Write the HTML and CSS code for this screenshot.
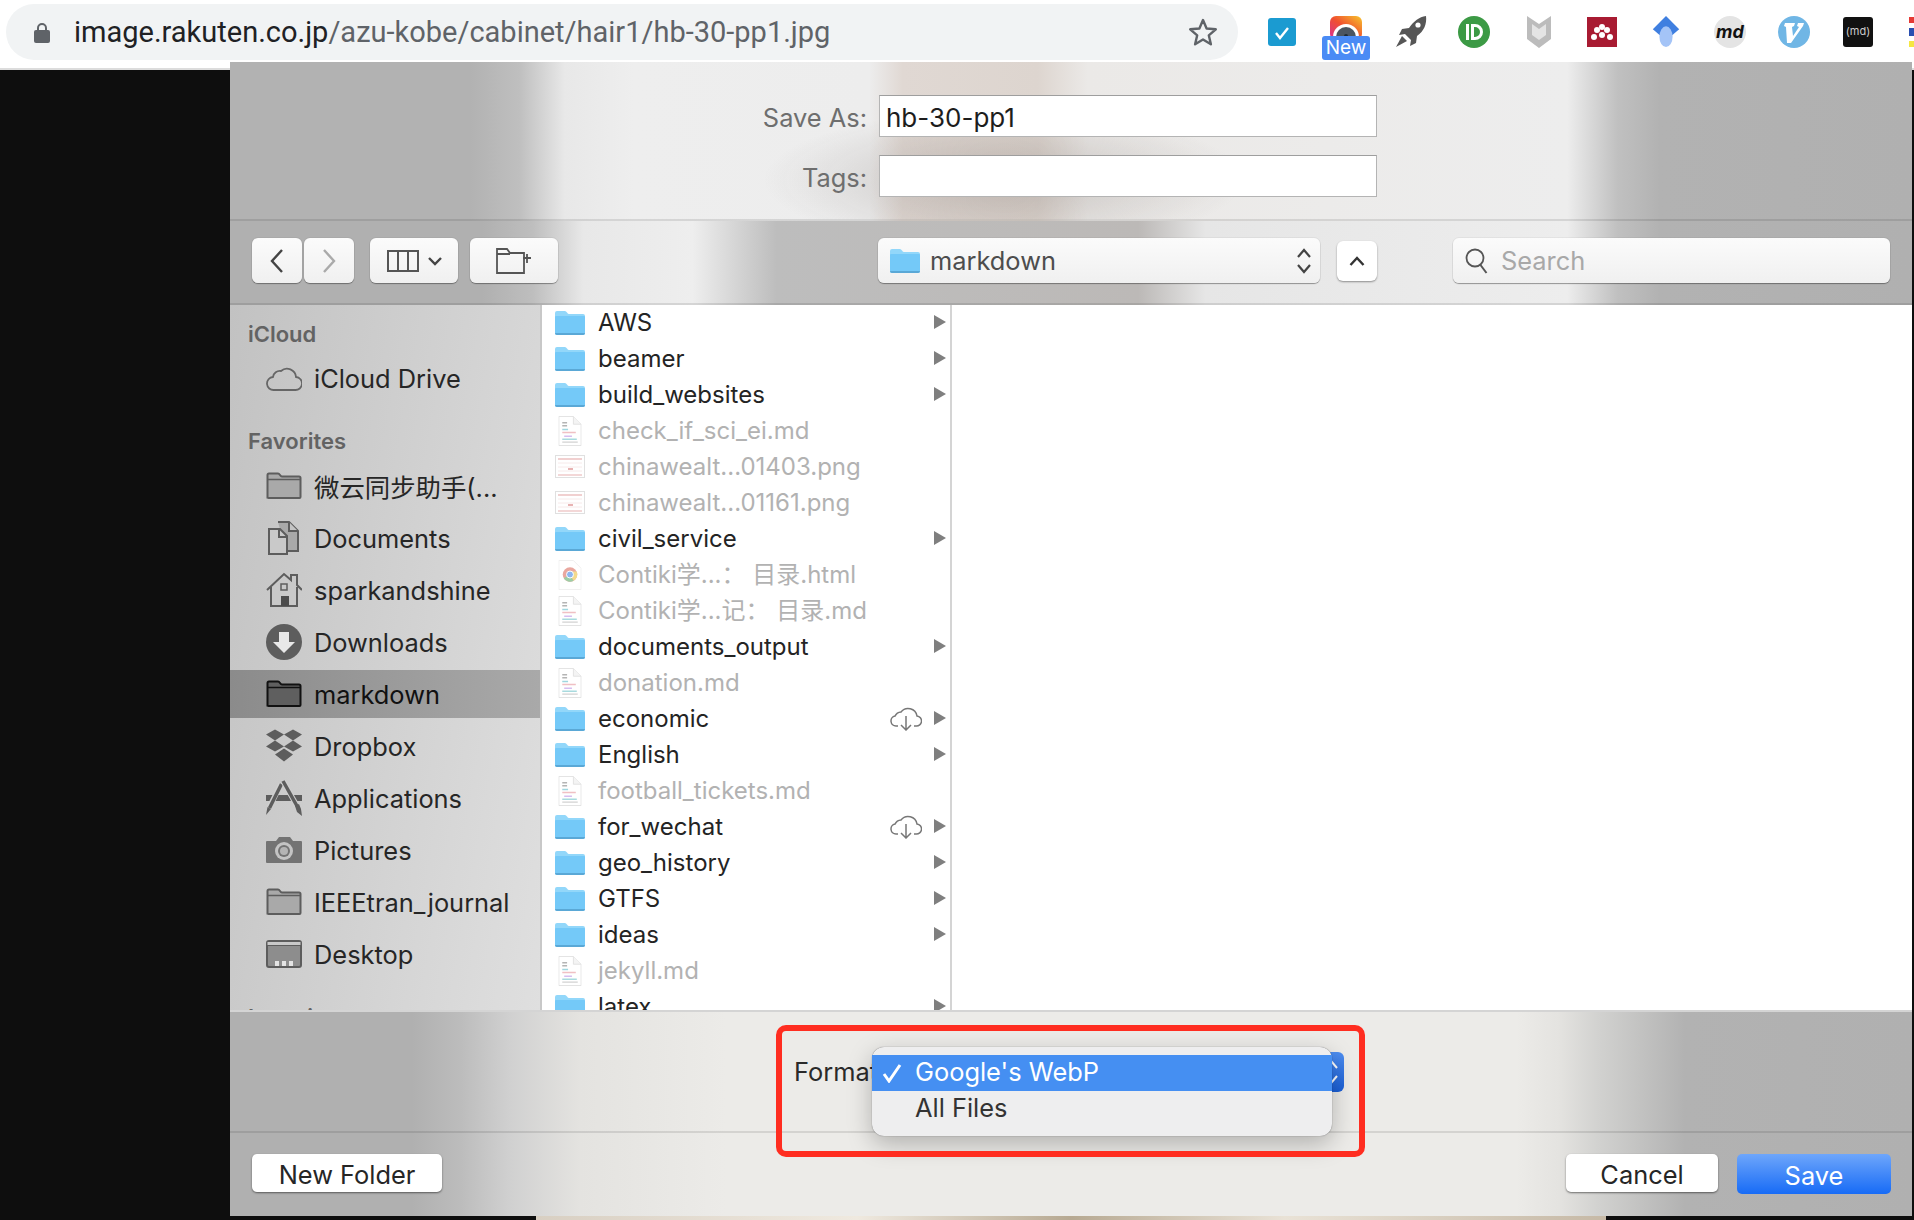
FILE: index.html
```html
<!DOCTYPE html>
<html>
<head>
    <meta charset="UTF-8">
    <title>Save As</title>
    <link rel="stylesheet" href="styles.css">
</head>
<body>
    <svg class="defs" width="0" height="0">
        <symbol id="blueFolder" viewBox="0 0 30 26">
            <path d="M0 3q0-2 2-2h8q1 0 2 1.500t2 1.500h14q2 0 2 2v16q0 2-2 2H2q-2 0-2-2z" fill="#92d7fa"/>
            <path d="M0 7q0-1 1-1h28q1 0 1 1v16q0 2-2 2H2q-2 0-2-2z" fill="#74c9f8"/>
            <path d="M0 23h30q0 2-2 2H2q-2 0-2-2z" fill="#5aa8d6"/>
        </symbol>
        <symbol id="mdDoc" viewBox="0 0 24 31">
            <path d="M.5.500h15l8 8v22H.5z" fill="#fff" stroke="#e2e2e2"/>
            <path d="M15.500.500v8h8" fill="#f4f4f4" stroke="#e2e2e2"/>
            <path d="M4 7h5M4 10h5" stroke="#b4b4b4" stroke-width="1.500"/>
            <path d="M4 14h6" stroke="#9fd6df" stroke-width="1.500"/>
            <path d="M4 17h14" stroke="#f0c0c4" stroke-width="1.500"/>
            <path d="M6 21h8" stroke="#d6bdf0" stroke-width="1.500"/>
            <path d="M4 24h15" stroke="#a8dade" stroke-width="1.500"/>
            <path d="M4 27h16" stroke="#d2d2d2" stroke-width="1.500"/>
        </symbol>
        <symbol id="pngDoc" viewBox="0 0 30 24">
            <rect x=".5" y=".5" width="29" height="22" fill="#fff" stroke="#e0e0e0"/>
            <path d="M3 4h24" stroke="#ecc0c0" stroke-width="1.500"/>
            <path d="M3 8h24M3 12h24M3 16h24" stroke="#f7eaea"/>
            <path d="M3 20h24" stroke="#efcaca" stroke-width="1.500"/>
            <path d="M13 14h5" stroke="#e09a9a" stroke-width="1.500"/>
        </symbol>
        <symbol id="chromeDoc" viewBox="0 0 24 31">
            <path d="M.5.500h15l8 8v22H.5z" fill="#fff" stroke="#efefef"/>
            <circle cx="12" cy="15" r="7.500" fill="#e9a79f"/>
            <path d="M12 15 5.500 18.800A7.500 7.500 0 0 0 15.800 21.500z" fill="#9dcda5"/>
            <path d="M12 15l3.800 6.500A7.500 7.500 0 0 0 19 12h-7z" fill="#f3da8d"/>
            <circle cx="12" cy="15" r="3.600" fill="#8eb6f0" stroke="#fff"/>
        </symbol>
        <symbol id="grayFolder" viewBox="0 0 36 28">
            <path d="M1.500 26.500V3q0-1.500 1.500-1.500h9q1 0 2 1.500t2 1.500h17q1.500 0 1.500 1.500v19q0 1-1 1H2.500q-1 0-1-1z" fill="#a9a9a9" stroke="#5d5d5d" stroke-width="2"/>
            <path d="M1.500 7.500h33" stroke="#5d5d5d" stroke-width="1.500"/>
        </symbol>
        <symbol id="cloudDown" viewBox="0 0 32 24">
            <path d="M8 19H6a5 5 0 0 1-1-9.900A7 7 0 0 1 11 5a9 9 0 0 1 16 4 5 5 0 0 1-1 10h-2" fill="none" stroke="#777" stroke-width="1.500"/>
            <path d="M16 9v14m-5-5 5 5 5-5" fill="none" stroke="#777" stroke-width="1.500"/>
        </symbol>
        <symbol id="arrowRight" viewBox="0 0 12 14">
            <path d="M0 0l12 7-12 7z" fill="#7f7f7f"/>
        </symbol>
    </svg>

    <header class="topbar">
        <div class="omnibox">
            <svg class="lock" viewBox="0 0 16 21"><path d="M4 9V6a4 4 0 0 1 8 0v3" fill="none" stroke="#5f6368" stroke-width="2"/><rect y="8" width="16" height="13" rx="2" fill="#5f6368"/></svg>
            <span class="url"><span class="url-host">image.rakuten.co.jp</span>/azu-kobe/cabinet/hair1/hb-30-pp1.jpg</span>
            <svg class="star" viewBox="0 0 30 28"><path d="M15 2l3.600 8.500 9.200.8-7 6 2.100 9L15 21.500l-7.900 4.800 2.100-9-7-6 9.200-.8z" fill="none" stroke="#5f6368" stroke-width="2.400" stroke-linejoin="round"/></svg>
        </div>
        <div class="extensions">
            <svg class="ext ext-check" viewBox="0 0 28 28"><rect width="28" height="28" rx="3" fill="#1b9bd1"/><path d="M8 15l4 5 8-10" fill="none" stroke="#fff" stroke-width="2.400"/></svg>
            <div class="ext-new">
                <svg class="ext-camera" viewBox="0 0 32 24"><defs><linearGradient id="insta" x1="0" x2="1" y1="1" y2="0"><stop offset="0" stop-color="#d62f9a"/><stop offset=".5" stop-color="#f0502f"/><stop offset="1" stop-color="#f7c52c"/></linearGradient></defs><rect width="32" height="24" rx="6" fill="url(#insta)"/><circle cx="16" cy="21" r="13" fill="#fff"/><circle cx="16" cy="21" r="10" fill="#4b5560"/><circle cx="16" cy="20" r="2" fill="#1f2a33"/></svg>
                <span class="new-badge">New</span>
            </div>
            <svg class="ext ext-rocket" viewBox="0 0 32 32"><path d="M31 0c1 8-2 15-9 20l-1 7-6 3 1-6-6-6-6 1 3-6 7-1C19 5 24 1 31 0z" fill="#565656"/><circle cx="23" cy="9" r="2.600" fill="#fff"/><path d="M7 20l5 5-11 6z" fill="#565656"/></svg>
            <svg class="ext ext-id" viewBox="0 0 32 32"><circle cx="16" cy="16" r="16" fill="#3c9a45"/><path d="M8 8h3v16H8z" fill="#fff"/><path d="M13 8h4a8 8 0 0 1 0 16h-4zm3 3v10h1a5 5 0 0 0 0-10z" fill="#fff"/></svg>
            <svg class="ext ext-shield" viewBox="0 0 24 32"><path d="M0 0l12 8L24 0v23l-12 9-12-9z" fill="#bcbcbc"/><path d="M5 8l7 5 7-5v11l-7 5-7-5z" fill="#e4e4e4"/></svg>
            <svg class="ext ext-mendeley" viewBox="0 0 30 30"><rect width="30" height="30" fill="#a81b32"/><g fill="#fff"><circle cx="15" cy="10" r="3"/><circle cx="10" cy="13" r="3"/><circle cx="20" cy="13" r="3"/><circle cx="7" cy="20" r="3"/><circle cx="15" cy="18" r="3"/><circle cx="23" cy="20" r="3"/></g></svg>
            <svg class="ext ext-scholar" viewBox="0 0 28 34"><path d="M14 0l14 14-14 12L0 14z" fill="#3f7fe0"/><ellipse cx="14" cy="22" rx="7" ry="11" fill="#a4c4f7"/></svg>
            <div class="ext-round ext-md">md</div>
            <svg class="ext ext-vim" viewBox="0 0 32 32"><circle cx="16" cy="16" r="16" fill="#70b6e5"/><path d="M7 7h10l-1 3-2 1 1 9 6-9-2-1 1-3h6l-1 3-12 17h-4L8 11 6 10z" fill="#fff"/></svg>
            <div class="ext-square">(md)</div>
            <div class="ext-cut"><i></i><i></i><i></i></div>
        </div>
    </header>

    <div class="stage">
        <main class="dialog">
            <section class="fields">
                <div class="field-row">
                    <label>Save As:</label>
                    <div class="field-input">hb-30-pp1</div>
                </div>
                <div class="field-row">
                    <label>Tags:</label>
                    <div class="field-input"></div>
                </div>
            </section>

            <section class="toolbar">
                <div class="tool tool-nav"><svg width="16" height="26" viewBox="0 0 16 26"><path d="M13 2 3 13l10 11" fill="none" stroke="#444" stroke-width="2.400"/></svg></div>
                <div class="tool tool-nav tool-forward"><svg width="16" height="26" viewBox="0 0 16 26"><path d="M3 2l10 11L3 24" fill="none" stroke="#aaa" stroke-width="2.400"/></svg></div>
                <div class="tool tool-view">
                    <svg width="32" height="22" viewBox="0 0 32 22"><rect x="1" y="1" width="30" height="20" fill="none" stroke="#555" stroke-width="2"/><path d="M11 1v20M21 1v20" stroke="#555" stroke-width="2"/></svg>
                    <svg width="14" height="10" viewBox="0 0 14 10"><path d="M1 2l6 6 6-6" fill="none" stroke="#444" stroke-width="2.400"/></svg>
                </div>
                <div class="tool tool-add">
                    <svg width="36" height="26" viewBox="0 0 36 26"><path d="M1 25V1h10l3 4h14v20zM1 6h13" fill="none" stroke="#555" stroke-width="1.800"/><path d="M31 6v9M27 10h8" stroke="#555" stroke-width="1.800"/></svg>
                </div>
                <div class="path-select">
                    <svg class="path-folder" viewBox="0 0 30 26"><use href="#blueFolder"/></svg>
                    <span class="path-name">markdown</span>
                    <svg class="path-arrows" width="16" height="26" viewBox="0 0 16 26"><path d="M2 9l6-7 6 7M2 17l6 7 6-7" fill="none" stroke="#444" stroke-width="2.200"/></svg>
                </div>
                <div class="up-button"><svg width="16" height="10" viewBox="0 0 16 10"><path d="M1.500 9 8 2l6.500 7" fill="none" stroke="#333" stroke-width="2.400"/></svg></div>
                <div class="search-box">
                    <svg width="24" height="26" viewBox="0 0 24 26"><circle cx="10" cy="10" r="8.500" fill="none" stroke="#555" stroke-width="1.800"/><path d="M15.500 17l6 8" stroke="#555" stroke-width="2"/></svg>
                    <span>Search</span>
                </div>
            </section>

            <section class="browser">
                <nav class="sidebar">
                    <h4 class="side-title">iCloud</h4>
                    <a class="side-item">
                        <svg class="side-icon" viewBox="0 0 36 36"><path d="M8 30a6.500 6.500 0 0 1-1-13 7 7 0 0 1 8-6 9 9 0 0 1 15 6 6.500 6.500 0 0 1-1 13z" fill="none" stroke="#666" stroke-width="1.800"/></svg>
                        iCloud Drive
                    </a>
                    <h4 class="side-title side-title-next">Favorites</h4>
                    <a class="side-item">
                        <svg class="side-icon" viewBox="0 0 36 28"><use href="#grayFolder"/></svg>
                        微云同步助手(...
                    </a>
                    <a class="side-item">
                        <svg class="side-icon" viewBox="0 0 36 36"><path d="M12 2h11l9 9v20H20" fill="#a9a9a9" stroke="#5d5d5d" stroke-width="2"/><path d="M23 2v9h9" fill="#c4c4c4" stroke="#5d5d5d" stroke-width="2"/><path d="M3 9h11l7 7v18H3z" fill="#c9c9c9" stroke="#5d5d5d" stroke-width="2"/><path d="M13 9v8h8" fill="none" stroke="#5d5d5d" stroke-width="2"/></svg>
                        Documents
                    </a>
                    <a class="side-item">
                        <svg class="side-icon" viewBox="0 0 36 36"><path d="M1 18 18 2l7 6V3h6v10l5 5" fill="#c9c9c9" stroke="#5d5d5d" stroke-width="2"/><path d="M5 15v19h26V15" fill="#c9c9c9" stroke="#5d5d5d" stroke-width="2"/><path d="M15 24h8v10h-8z" fill="#4c4c4c"/><rect x="15" y="12" width="6" height="6" fill="none" stroke="#5d5d5d" stroke-width="1.500"/></svg>
                        sparkandshine
                    </a>
                    <a class="side-item">
                        <svg class="side-icon" viewBox="0 0 36 36"><circle cx="18" cy="18" r="18" fill="#5d5d5d"/><path d="M13 8h10v10h6L18 29 7 18h6z" fill="#e8e8e8"/></svg>
                        Downloads
                    </a>
                    <a class="side-item side-item-active">
                        <svg class="side-icon" viewBox="0 0 36 28"><path d="M1.500 26.500V3q0-1.500 1.500-1.500h9q1 0 2 1.500t2 1.500h17q1.500 0 1.500 1.500v19q0 1-1 1H2.500q-1 0-1-1z" fill="#5f5f5f" stroke="#111" stroke-width="2"/><path d="M1.500 7.500h33" stroke="#111" stroke-width="1.500"/></svg>
                        markdown
                    </a>
                    <a class="side-item">
                        <svg class="side-icon" viewBox="0 0 36 33"><path d="M9 0l9 5-9 6-9-6zM27 0l9 5-9 6-9-6zM9 11l9 6-9 5-9-5zM27 11l9 6-9 5-9-5zM18 19l9 6-9 7-9-7z" fill="#5d5d5d"/></svg>
                        Dropbox
                    </a>
                    <a class="side-item">
                        <svg class="side-icon" viewBox="0 0 36 36"><path d="M0 15h36v6H0z" fill="#5d5d5d"/><path d="M15 4 3.500 27" stroke="#d0d0d0" stroke-width="5.500"/><path d="M15.500 4 3.500 28" stroke="#5d5d5d" stroke-width="3.500"/><path d="M1.500 27l3.500 2L0 35z" fill="#5d5d5d"/><path d="M17 1l14 25" stroke="#d0d0d0" stroke-width="5.500"/><path d="M17 1l14 25" stroke="#5d5d5d" stroke-width="3.500"/><path d="M29 26l4-2 2 5 1 7-5-4z" fill="#5d5d5d"/></svg>
                        Applications
                    </a>
                    <a class="side-item">
                        <svg class="side-icon" viewBox="0 0 36 28"><path d="M0 6q0-1 1-1h9l3-4h11l3 4h8q1 0 1 1v20q0 1-1 1H1q-1 0-1-1z" fill="#737373"/><circle cx="18" cy="15" r="9" fill="#c4c4c4"/><circle cx="18" cy="15" r="6" fill="#737373"/><circle cx="18" cy="15" r="4" fill="#b4b4b4"/></svg>
                        Pictures
                    </a>
                    <a class="side-item">
                        <svg class="side-icon" viewBox="0 0 36 28"><use href="#grayFolder"/></svg>
                        IEEEtran_journal
                    </a>
                    <a class="side-item">
                        <svg class="side-icon" viewBox="0 0 36 28"><rect x="1" y="1" width="34" height="26" rx="2" fill="#8d8d8d" stroke="#5d5d5d" stroke-width="2"/><path d="M1 5h34" stroke="#5d5d5d" stroke-width="2"/><rect x="1.500" y="2" width="33" height="3" fill="#c9c9c9"/><path d="M9 21h4v5H9zM16 21h4v5h-4zM23 21h4v5h-4z" fill="#e4e4e4"/></svg>
                        Desktop
                    </a>
                    <h4 class="side-title side-title-next">Locations</h4>
                </nav>

                <ul class="file-list">
                    <li class="file"><svg class="file-icon" viewBox="0 0 30 26"><use href="#blueFolder"/></svg><span class="file-name">AWS</span><svg class="file-arrow" viewBox="0 0 12 14"><use href="#arrowRight"/></svg></li>
                    <li class="file"><svg class="file-icon" viewBox="0 0 30 26"><use href="#blueFolder"/></svg><span class="file-name">beamer</span><svg class="file-arrow" viewBox="0 0 12 14"><use href="#arrowRight"/></svg></li>
                    <li class="file"><svg class="file-icon" viewBox="0 0 30 26"><use href="#blueFolder"/></svg><span class="file-name">build_websites</span><svg class="file-arrow" viewBox="0 0 12 14"><use href="#arrowRight"/></svg></li>
                    <li class="file file-off"><svg class="file-icon" viewBox="0 0 30 31"><use href="#mdDoc" x="3" width="24" height="31"/></svg><span class="file-name">check_if_sci_ei.md</span></li>
                    <li class="file file-off"><svg class="file-icon" viewBox="0 0 30 24"><use href="#pngDoc"/></svg><span class="file-name">chinawealt...01403.png</span></li>
                    <li class="file file-off"><svg class="file-icon" viewBox="0 0 30 24"><use href="#pngDoc"/></svg><span class="file-name">chinawealt...01161.png</span></li>
                    <li class="file"><svg class="file-icon" viewBox="0 0 30 26"><use href="#blueFolder"/></svg><span class="file-name">civil_service</span><svg class="file-arrow" viewBox="0 0 12 14"><use href="#arrowRight"/></svg></li>
                    <li class="file file-off"><svg class="file-icon" viewBox="0 0 30 31"><use href="#chromeDoc" x="3" width="24" height="31"/></svg><span class="file-name">Contiki学...： 目录.html</span></li>
                    <li class="file file-off"><svg class="file-icon" viewBox="0 0 30 31"><use href="#mdDoc" x="3" width="24" height="31"/></svg><span class="file-name">Contiki学...记： 目录.md</span></li>
                    <li class="file"><svg class="file-icon" viewBox="0 0 30 26"><use href="#blueFolder"/></svg><span class="file-name">documents_output</span><svg class="file-arrow" viewBox="0 0 12 14"><use href="#arrowRight"/></svg></li>
                    <li class="file file-off"><svg class="file-icon" viewBox="0 0 30 31"><use href="#mdDoc" x="3" width="24" height="31"/></svg><span class="file-name">donation.md</span></li>
                    <li class="file"><svg class="file-icon" viewBox="0 0 30 26"><use href="#blueFolder"/></svg><span class="file-name">economic</span><svg class="file-cloud" viewBox="0 0 32 24"><use href="#cloudDown"/></svg><svg class="file-arrow" viewBox="0 0 12 14"><use href="#arrowRight"/></svg></li>
                    <li class="file"><svg class="file-icon" viewBox="0 0 30 26"><use href="#blueFolder"/></svg><span class="file-name">English</span><svg class="file-arrow" viewBox="0 0 12 14"><use href="#arrowRight"/></svg></li>
                    <li class="file file-off"><svg class="file-icon" viewBox="0 0 30 31"><use href="#mdDoc" x="3" width="24" height="31"/></svg><span class="file-name">football_tickets.md</span></li>
                    <li class="file"><svg class="file-icon" viewBox="0 0 30 26"><use href="#blueFolder"/></svg><span class="file-name">for_wechat</span><svg class="file-cloud" viewBox="0 0 32 24"><use href="#cloudDown"/></svg><svg class="file-arrow" viewBox="0 0 12 14"><use href="#arrowRight"/></svg></li>
                    <li class="file"><svg class="file-icon" viewBox="0 0 30 26"><use href="#blueFolder"/></svg><span class="file-name">geo_history</span><svg class="file-arrow" viewBox="0 0 12 14"><use href="#arrowRight"/></svg></li>
                    <li class="file"><svg class="file-icon" viewBox="0 0 30 26"><use href="#blueFolder"/></svg><span class="file-name">GTFS</span><svg class="file-arrow" viewBox="0 0 12 14"><use href="#arrowRight"/></svg></li>
                    <li class="file"><svg class="file-icon" viewBox="0 0 30 26"><use href="#blueFolder"/></svg><span class="file-name">ideas</span><svg class="file-arrow" viewBox="0 0 12 14"><use href="#arrowRight"/></svg></li>
                    <li class="file file-off"><svg class="file-icon" viewBox="0 0 30 31"><use href="#mdDoc" x="3" width="24" height="31"/></svg><span class="file-name">jekyll.md</span></li>
                    <li class="file"><svg class="file-icon" viewBox="0 0 30 26"><use href="#blueFolder"/></svg><span class="file-name">latex</span><svg class="file-arrow" viewBox="0 0 12 14"><use href="#arrowRight"/></svg></li>
                </ul>
                <div class="preview"></div>
            </section>

            <section class="format-bar">
                <span class="format-label">Format:</span>
                <div class="format-select">
                    <svg width="12" height="26" viewBox="0 0 12 26"><path d="M1 9l5-6 5 6M1 17l5 6 5-6" fill="none" stroke="#fff" stroke-width="2"/></svg>
                </div>
            </section>

            <section class="actions">
                <button class="btn">New Folder</button>
                <button class="btn btn-cancel">Cancel</button>
                <button class="btn btn-save">Save</button>
            </section>

            <!-- popup open over the format select -->
            <div class="format-menu">
                <div class="menu-item menu-item-on">
                    <svg width="20" height="20" viewBox="0 0 20 20"><path d="M2 11l5 7L18 2" fill="none" stroke="#fff" stroke-width="3"/></svg>
                    <span>Google's WebP</span>
                </div>
                <div class="menu-item"><span>All Files</span></div>
            </div>
            <div class="red-mark"></div>
        </main>
        <div class="photo-strip"></div>
    </div>
</body>
</html>
```

FILE: styles.css
```css
* {
    box-sizing: border-box;
}
html, body {
    margin: 0;
    height: 100%;
    overflow: hidden;
}
body {
    width: 1914px;
    height: 1220px;
    background: #0e0e0e;
    color: #242424;
    font-family: Inter, "Noto Sans CJK SC", sans-serif;
    font-size: 25.4px;
}
.defs {
    position: absolute;
}

/* browser bar */
.topbar {
    height: 62px;
    background: #fff;
    display: flex;
    padding: 4px 0 2px 6px;
}
.omnibox {
    width: 1232px;
    height: 56px;
    background: #f1f3f4;
    border-radius: 28px;
    display: flex;
    align-items: center;
    padding: 0 20px 0 28px;
}
.lock {
    width: 16px;
    height: 21px;
}
.url {
    margin-left: 24px;
    font-family: Roboto, sans-serif;
    font-size: 29px;
    color: #5f6368;
    flex: 1;
}
.url-host {
    color: #202124;
}
.star {
    width: 30px;
    height: 28px;
}
.extensions {
    display: flex;
    align-items: center;
    flex: 1;
    height: 56px;
    padding-left: 30px;
}
.ext {
    display: block;
    flex: none;
}
.ext-check {
    width: 28px;
    height: 28px;
    margin-right: 26px;
}
.ext-new {
    width: 48px;
    height: 56px;
    margin-right: 25px;
    text-align: center;
    padding-top: 12px;
    position: relative;
}
.ext-camera {
    width: 32px;
    height: 24px;
    display: block;
    margin: 0 auto;
}
.new-badge {
    position: absolute;
    left: 0;
    top: 32px;
    width: 48px;
    height: 24px;
    background: #4a8bf5;
    border-radius: 3px;
    color: #fff;
    font-size: 19px;
    line-height: 24px;
}
.ext-rocket {
    width: 32px;
    height: 32px;
    margin-right: 31px;
}
.ext-id {
    width: 32px;
    height: 32px;
    margin-right: 37px;
}
.ext-shield {
    width: 24px;
    height: 32px;
    margin-right: 36px;
}
.ext-mendeley {
    width: 30px;
    height: 30px;
    margin-right: 35px;
}
.ext-scholar {
    width: 28px;
    height: 32px;
    margin-right: 34px;
}
.ext-round {
    width: 32px;
    height: 32px;
    margin-right: 32px;
    border-radius: 50%;
    background: #e4e4e4;
    color: #111;
    font-size: 18px;
    font-weight: 700;
    font-style: italic;
    text-align: center;
    line-height: 31px;
}
.ext-vim {
    width: 32px;
    height: 32px;
    margin-right: 33px;
}
.ext-square {
    width: 30px;
    height: 30px;
    margin-right: 36px;
    border-radius: 3px;
    background: #111;
    color: #ccc;
    font-size: 11px;
    text-align: center;
    line-height: 29px;
}
.ext-cut {
    width: 5px;
    flex: none;
    height: 30px;
    display: flex;
    flex-direction: column;
    justify-content: space-between;
}
.ext-cut i {
    display: block;
    height: 6px;
    background: #e53935;
}
.ext-cut i:nth-child(2) {
    background: #2a4fb0;
    height: 8px;
}
.ext-cut i:nth-child(3) {
    background: #f5e642;
}

/* backdrop behind the sheet */
.stage {
    height: 1158px;
    padding-left: 230px;
    background: linear-gradient(#fff 6px, #dcdcdc 6px, #dcdcdc 8px, #0e0e0e 8px);
}
.dialog {
    position: relative;
    width: 1682px;
    height: 1154px;
    display: flex;
    flex-direction: column;
}
.photo-strip {
    width: 1070px;
    height: 4px;
    margin-left: 306px;
    background: linear-gradient(90deg, #d8cfc2, #efe9df 30%, #b7a992 50%, #e9e2d6 70%, #c6b9a6);
}

/* name and tags */
.fields {
    height: 159px;
    padding-top: 33px;
    border-bottom: 2px solid rgba(0, 0, 0, .1);
    background:
        radial-gradient(ellipse 240px 70px at 46% 75%, rgba(120, 110, 105, .32), transparent),
        linear-gradient(90deg, #b2b2b2 0, #b2b2b2 14.300%, #bfbfbf 17.200%, #e8e8e8 19.900%, #eeeeee 24%, #ededed 38%, #e0d8d3 40%, #ddd5cf 48%, #ebe9e7 51%, #ededed 79.500%, #c0c0c0 82.500%, #b2b2b2 85%, #b0b0b0 100%);
}
.field-row {
    display: grid;
    grid-template-columns: 637px 498px;
    column-gap: 12px;
    align-items: center;
    margin-bottom: 18px;
}
.field-row label {
    text-align: right;
    color: #6e6e6e;
    padding-top: 2px;
}
.field-input {
    height: 42px;
    line-height: 44px;
    padding-left: 6px;
    background: #fff;
    border: 1px solid #b4b4b4;
    border-top-color: #9e9e9e;
    color: #1d1d1d;
    font-size: 26px;
}

/* toolbar */
.toolbar {
    height: 84px;
    display: flex;
    align-items: center;
    padding: 0 22px 3px;
    border-bottom: 2px solid rgba(0, 0, 0, .1);
    background: linear-gradient(90deg, #b0b0b0 0, #b0b0b0 15%, #bebebe 18%, #e8e8e8 21%, #eeeeee 27.500%, #bdbdbd 32.500%, #bcb9b7 54%, #e6e6e6 58%, #ededed 79.500%, #c0c0c0 82.500%, #b2b2b2 85%, #b0b0b0 100%);
}
.tool,
.path-select,
.search-box {
    height: 45px;
    border-radius: 6px;
    background: linear-gradient(#fbfbfb, #f0f0f0);
    box-shadow: 0 1px 1px rgba(0, 0, 0, .35), 0 0 0 1px rgba(0, 0, 0, .04);
    display: flex;
    align-items: center;
    justify-content: center;
}
.tool-nav {
    width: 50px;
}
.tool-forward {
    margin-left: 2px;
}
.tool-view {
    width: 88px;
    margin-left: 16px;
    gap: 9px;
}
.tool-add {
    width: 88px;
    margin-left: 12px;
}
.path-select {
    width: 442px;
    margin-left: 320px;
    justify-content: flex-start;
    padding: 0 8px 0 12px;
    color: #4d4d4d;
}
.path-folder {
    width: 30px;
    height: 26px;
}
.path-name {
    margin-left: 10px;
    flex: 1;
}
.up-button {
    width: 40px;
    height: 40px;
    margin-left: 17px;
    background: #fff;
    border-radius: 6px;
    box-shadow: 0 1px 2px rgba(0, 0, 0, .4);
    display: flex;
    align-items: center;
    justify-content: center;
}
.search-box {
    width: 437px;
    margin-left: 76px;
    justify-content: flex-start;
    padding-left: 12px;
    gap: 12px;
    color: #a8a8a8;
}

/* columns */
.browser {
    height: 705px;
    display: flex;
    overflow: hidden;
}
.sidebar {
    width: 312px;
    flex: none;
    padding-top: 11px;
    overflow: hidden;
    background: linear-gradient(100deg, #c2c2c2, #dfdfdf);
    border-right: 2px solid #c8c8c8;
}
.side-title {
    margin: 0;
    height: 38px;
    line-height: 36px;
    padding-left: 18px;
    font-size: 22px;
    font-weight: 600;
    color: #636363;
}
.side-title-next {
    margin-top: 21px;
    margin-bottom: 1px;
}
.side-item {
    height: 48px;
    margin-bottom: 4px;
    padding-left: 36px;
    display: flex;
    align-items: center;
    gap: 12px;
    color: #262626;
}
.side-item-active {
    background: linear-gradient(90deg, #8b8b8b, #a9a9a9);
    color: #111;
}
.side-icon {
    width: 36px;
    height: 36px;
    flex: none;
}
.file-list {
    list-style: none;
    margin: 0;
    padding: 0;
    width: 410px;
    flex: none;
    overflow: hidden;
    background: #fff;
    border-right: 2px solid #d4d4d4;
    font-size: 24px;
}
.file {
    height: 36px;
    display: flex;
    align-items: center;
    padding: 0 4px 0 13px;
}
.file-icon {
    width: 30px;
    height: 30px;
    flex: none;
}
.file-name {
    margin-left: 13px;
    flex: 1;
    color: #242424;
    line-height: 36px;
}
.file-off .file-name {
    color: #b2b2b2;
}
.file-arrow {
    width: 12px;
    height: 14px;
    flex: none;
    margin-bottom: 2px;
}
.file-cloud {
    width: 32px;
    height: 24px;
    flex: none;
    margin-right: 12px;
}
.preview {
    flex: 1;
    background: #fff;
}

/* format row */
.format-bar {
    height: 123px;
    border-top: 2px solid #d4d4d4;
    border-bottom: 2px solid rgba(0, 0, 0, .1);
    display: flex;
    align-items: center;
    padding-left: 564px;
    background: linear-gradient(90deg, #b0b0b0 0, #b0b0b0 10.800%, #bcbcbc 13.700%, #d0d0d0 16.600%, #e4e3e0 20.800%, #ecebe8 29.500%, #ecebe8 76.500%, #e4e3e0 79%, #d2d2d0 81.300%, #b2b2b2 86.500%, #b0b0b0 100%);
}
.format-label {
    width: 86px;
    color: #2a2a2a;
}
.format-select {
    width: 464px;
    height: 40px;
    border-radius: 6px;
    background: linear-gradient(#4d8df0, #1a5fd6);
    display: flex;
    align-items: center;
    justify-content: flex-end;
    padding-right: 6px;
}
.format-menu {
    position: absolute;
    left: 642px;
    top: 985px;
    width: 460px;
    height: 89px;
    padding-top: 8px;
    border-radius: 12px;
    background: #eeeeef;
    box-shadow: 0 0 1px rgba(0, 0, 0, .6), 0 8px 24px rgba(0, 0, 0, .25);
}
.menu-item {
    height: 36px;
    display: flex;
    align-items: center;
    padding: 0 0 3px 43px;
    color: #333;
    position: relative;
}
.menu-item-on {
    background: #458ff2;
    color: #fff;
}
.menu-item svg {
    position: absolute;
    left: 10px;
    top: 8px;
}
.red-mark {
    position: absolute;
    left: 546px;
    top: 963px;
    width: 589px;
    height: 132px;
    border: 6px solid #ff2d20;
    border-radius: 10px;
}

/* bottom buttons */
.actions {
    flex: 1;
    display: flex;
    align-items: flex-start;
    padding: 21px 21px 0 22px;
    background: linear-gradient(90deg, #b0b0b0 0, #b0b0b0 10.800%, #bcbcbc 13.700%, #d0d0d0 16.600%, #e4e3e0 20.800%, #ecebe8 29.500%, #ecebe8 76.500%, #e4e3e0 79%, #d2d2d0 81.300%, #b2b2b2 86.500%, #b0b0b0 100%);
}
.btn {
    width: 190px;
    height: 38px;
    border: none;
    border-radius: 5px;
    background: #fff;
    box-shadow: 0 1px 2px rgba(0, 0, 0, .5);
    font: inherit;
    color: #262626;
    padding: 2px 0 0;
}
.btn-cancel {
    width: 152px;
    margin-left: auto;
}
.btn-save {
    width: 154px;
    height: 40px;
    margin-left: 19px;
    color: #fff;
    box-shadow: none;
    background: linear-gradient(#6ea6fb, #176bf6);
}
```
